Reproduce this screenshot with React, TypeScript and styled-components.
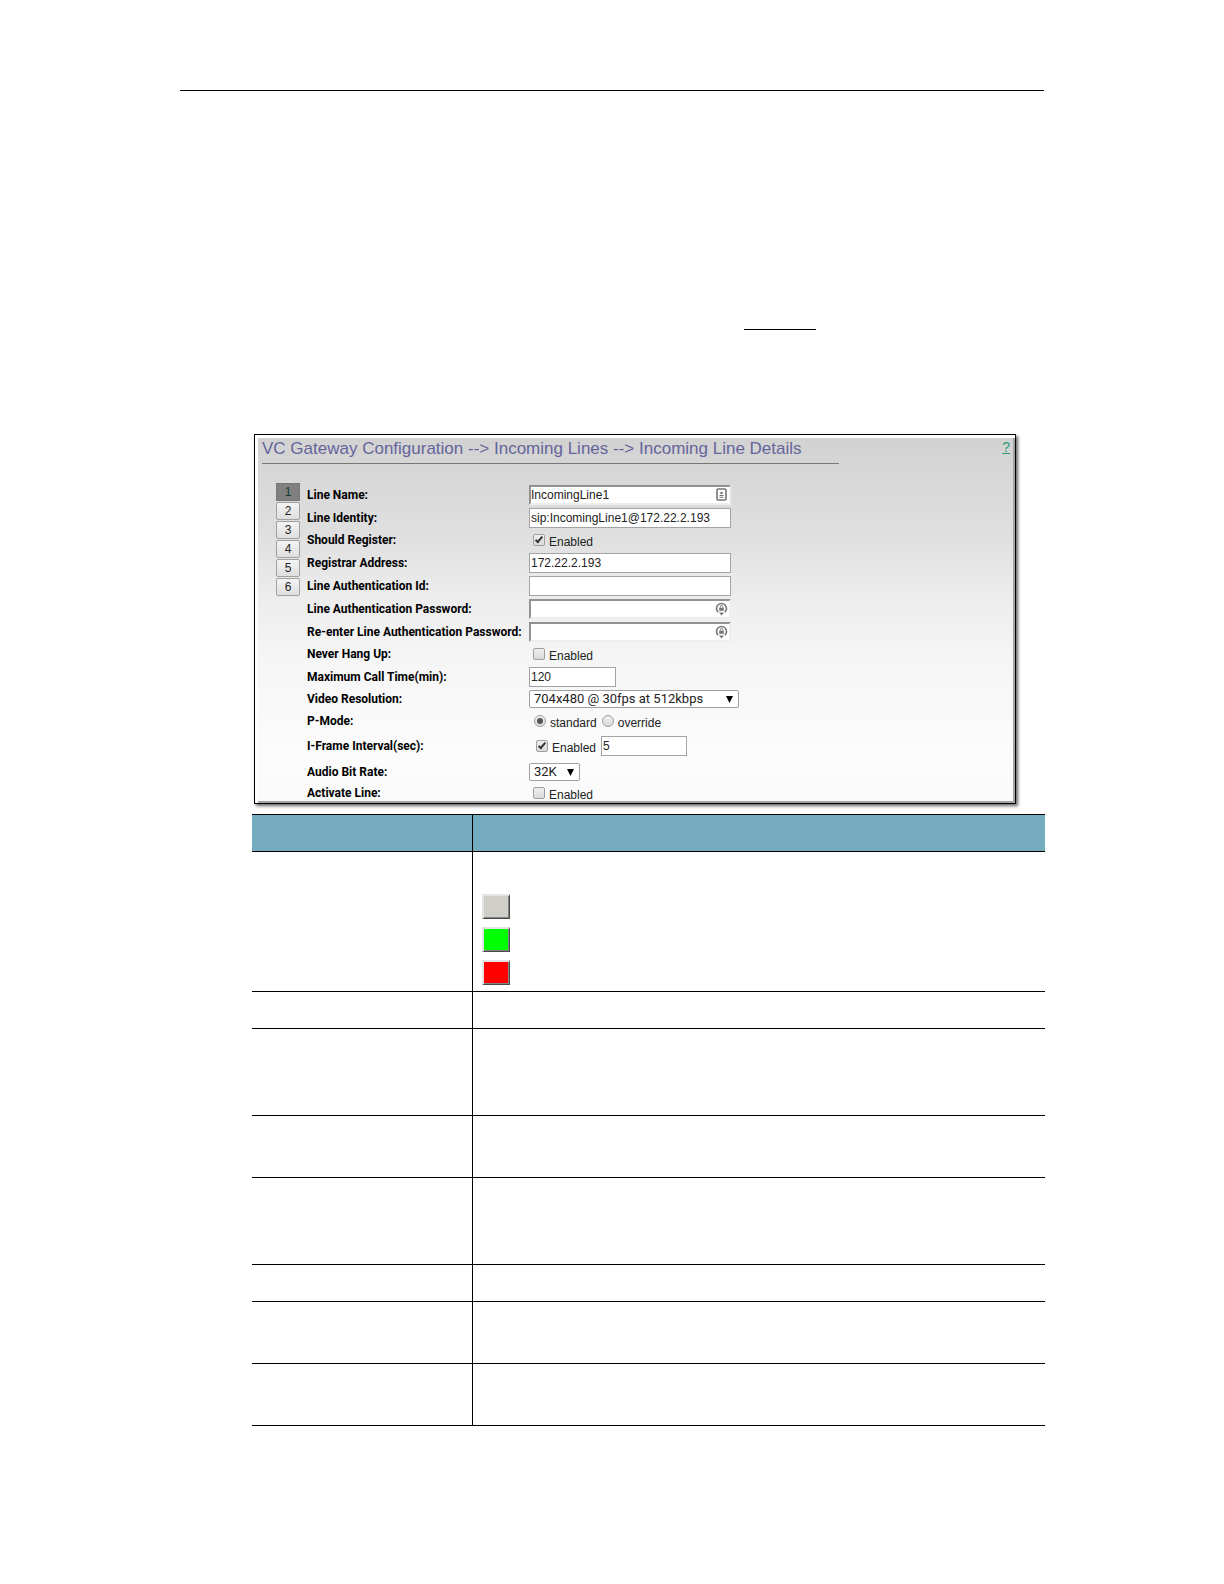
import React from 'react';
import styled, { createGlobalStyle, css } from 'styled-components';

const GlobalStyle = createGlobalStyle`
  *, *::before, *::after { box-sizing: border-box; }
  body {
    margin: 0;
    background: #fff;
    color: #000;
    font-family: "Liberation Sans", Arial, sans-serif;
    font-size: 12px;
  }
`;

const Page = styled.main`
  padding: 90px 180px 158px;
`;

const HeaderRule = styled.hr`
  height: 1px;
  margin: 0;
  border: 0;
  background: #000;
`;

const Intro = styled.section`
  display: flex;
  flex-direction: column;
  padding: 238px 0 104px 564px;
`;

const ReferenceRule = styled.hr`
  width: 72px;
  height: 1px;
  margin: 0;
  border: 0;
  background: #000;
`;

const Figure = styled.section`
  margin: 0 28px 0 74px;
  padding: 3px 0 0 3px;
  border: 1px solid #000;
  background: #fff;
  box-shadow: 2px 2px 3px rgba(0, 0, 0, 0.6);
`;

const Panel = styled.div`
  border: solid #a4a4a4;
  border-width: 0 2px 2px 0;
  background: linear-gradient(#d2d2d2 0, #dfdfdf 95px, #ededed 160px, #f6f6f6 225px, #fcfcfc 320px, #fafafa 100%);
  padding: 0 0 0 4px;
`;

const TitleBar = styled.header`
  display: flex;
  justify-content: space-between;
  height: 26px;
  padding-right: 3px;
`;

const Title = styled.h1`
  flex: 0 1 577px;
  margin: 0;
  border-bottom: 1px solid #777;
  color: #65659b;
  font-size: 17px;
  font-weight: 400;
  line-height: 22px;
  white-space: nowrap;
`;

const HelpLink = styled.a`
  color: #2d9b70;
  font-size: 14px;
  line-height: 18px;
`;

const Body = styled.div`
  display: flex;
  gap: 7px;
  padding: 19px 0 0 14px;
`;

const Pager = styled.nav`
  display: flex;
  flex-direction: column;
  gap: 1px;
`;

const PageButton = styled.button<{ $current?: boolean }>`
  width: 24px;
  height: 18px;
  padding: 0;
  border: 1px solid ${p => (p.$current ? '#777' : '#a0a0a0')};
  border-radius: ${p => (p.$current ? '0' : '2px')};
  background: ${p => (p.$current ? '#808080' : 'linear-gradient(#f4f4f4, #dedede)')};
  color: ${p => (p.$current ? '#123d2c' : '#222')};
  font: 12px/14px "Liberation Sans", Arial, sans-serif;
`;

const Form = styled.form`
  flex: 1;
`;

const Row = styled.div<{ $height: number }>`
  display: grid;
  grid-template-columns: 222px 1fr;
  align-items: center;
  height: ${p => p.$height}px;
`;

const RowLabel = styled.label`
  font-family: Roboto, "Liberation Sans", sans-serif;
  font-weight: 700;
  line-height: 16px;
  white-space: nowrap;
`;

const Field = styled.div`
  display: flex;
  align-items: center;
`;

const Options = styled(Field)<{ $indent: number }>`
  padding-left: ${p => p.$indent}px;
`;

const InputBox = styled.div`
  position: relative;
  display: flex;
  justify-self: start;
`;

const TextInput = styled.input<{ $width: number; $inset?: boolean }>`
  width: ${p => p.$width}px;
  height: 20px;
  padding: 0 1px;
  border: 1px solid #a3a3a3;
  border-radius: 0;
  outline: 0;
  background: #fff;
  color: #222;
  font: 12px "Liberation Sans", Arial, sans-serif;
  ${p => p.$inset && css`
    border: 2px solid;
    border-color: #929292 #eee #eee #929292;
    padding: 0;
  `}
`;

const FieldIcon = styled.svg`
  position: absolute;
  top: 3px;
  right: 3px;
  width: 13px;
  height: 14px;
`;

const Choice = styled.label`
  display: flex;
  align-items: center;
  gap: 4px;
  margin-right: 5px;
  color: #222;
`;

const ChoiceText = styled.span`
  padding-top: 4px;
  line-height: 16px;
`;

const tick = css`
  &:checked::after {
    content: "";
    position: absolute;
    left: 3px;
    top: 0;
    width: 4px;
    height: 8px;
    border: solid #333;
    border-width: 0 2px 2px 0;
    transform: rotate(40deg);
  }
`;

const dot = css`
  &:checked::after {
    content: "";
    position: absolute;
    inset: 2px;
    border-radius: 50%;
    background: #555;
  }
`;

const Toggle = styled.input`
  appearance: none;
  position: relative;
  width: 12px;
  height: 12px;
  margin: 0;
  border: 1px solid #a0a0a0;
  border-radius: ${p => (p.type === 'radio' ? '50%' : '2px')};
  background: linear-gradient(#efefef, #dadada);
  ${p => (p.type === 'radio' ? dot : tick)}
`;

const SelectBox = styled.div<{ $width: number }>`
  position: relative;
  display: flex;
  width: ${p => p.$width}px;
`;

const Select = styled.select`
  appearance: none;
  width: 100%;
  height: 18px;
  padding: 0 4px;
  border: 1px solid #a0a0a0;
  border-radius: 2px;
  background: #fff;
  color: #222;
  font: 13px/16px Roboto, "Liberation Sans", sans-serif;
`;

const Arrow = styled.svg`
  position: absolute;
  top: 6px;
  right: 6px;
  width: 7px;
  height: 7px;
  pointer-events: none;
`;

const Table = styled.table`
  width: calc(100% - 71px);
  margin: 10px 0 0 72px;
  border-collapse: collapse;
  table-layout: fixed;
`;

const HeadCell = styled.th<{ $narrow?: boolean }>`
  width: ${p => (p.$narrow ? '220px' : 'auto')};
  height: 37px;
  padding: 0;
  border: solid #000;
  border-width: 1px 0;
  background: #75abbe;
  & + & { border-left-width: 1px; }
`;

const Cell = styled.td<{ $height: number }>`
  height: ${p => p.$height}px;
  padding: 0 9px;
  border-bottom: 1px solid #000;
  vertical-align: bottom;
  & + & { border-left: 1px solid #000; }
`;

const Swatches = styled.div`
  display: flex;
  flex-direction: column;
  gap: 8px;
  padding-bottom: 6px;
`;

const Swatch = styled.span<{ $color: string }>`
  width: 28px;
  height: 25px;
  border: solid;
  border-width: 2px 1px 1px 2px;
  border-color: #e4e4e4 #484848 #484848 #e4e4e4;
  background: ${p => p.$color};
  box-shadow: inset -1px -1px #858585;
`;

const CardIcon = () => (
  <FieldIcon viewBox="0 0 13 14" fill="none" stroke="#777" aria-hidden="true">
    <rect x="2" y="1" width="9" height="11" rx="1" strokeWidth="1.6" />
    <circle cx="6.5" cy="5" r="1.3" fill="#777" stroke="none" />
    <path d="M4.5 7.5h4M4.5 9.3h4" />
  </FieldIcon>
);

const LockIcon = () => (
  <FieldIcon viewBox="0 0 13 14" fill="none" stroke="#777" aria-hidden="true">
    <path d="M3.2 10.2A5 5 0 1 1 9.8 10.2" strokeWidth="1.6" />
    <path d="M4 10.4h5L6.5 13.6z" fill="#777" stroke="none" />
    <rect x="4.2" y="5.8" width="4.6" height="3" fill="#777" stroke="none" />
    <path d="M5.2 5.8V4.8a1.3 1.3 0 0 1 2.6 0v1" />
  </FieldIcon>
);

interface TextRowProps {
  id: string;
  label: string;
  value?: string;
  type?: string;
  width?: number;
  icon?: React.ReactNode;
}

const TextRow = ({ id, label, value = '', type = 'text', width = 202, icon }: TextRowProps) => (
  <Row $height={23}>
    <RowLabel htmlFor={id}>{label}</RowLabel>
    <InputBox>
      <TextInput id={id} type={type} defaultValue={value} $width={width} $inset={Boolean(icon)} />
      {icon}
    </InputBox>
  </Row>
);

const CheckRow = ({ id, label, checked, height = 22 }: { id: string; label: string; checked?: boolean; height?: number }) => (
  <Row $height={height}>
    <RowLabel htmlFor={id}>{label}</RowLabel>
    <Options $indent={4}>
      <Choice>
        <Toggle id={id} type="checkbox" defaultChecked={checked} />
        <ChoiceText>Enabled</ChoiceText>
      </Choice>
    </Options>
  </Row>
);

const SelectRow = ({ id, label, value, width }: { id: string; label: string; value: string; width: number }) => (
  <Row $height={22}>
    <RowLabel htmlFor={id}>{label}</RowLabel>
    <SelectBox $width={width}>
      <Select id={id} defaultValue={value}>
        <option>{value}</option>
      </Select>
      <Arrow viewBox="0 0 7 7" aria-hidden="true"><path d="M0 0h7L3.5 7z" /></Arrow>
    </SelectBox>
  </Row>
);

const rowHeights = [37, 87, 62, 87, 37, 62, 62];

export default function App() {
  return (
    <>
      <GlobalStyle />
      <Page>
        <HeaderRule />
        <Intro><ReferenceRule /></Intro>
        <Figure>
          <Panel>
            <TitleBar>
              <Title>VC Gateway Configuration --&gt; Incoming Lines --&gt; Incoming Line Details</Title>
              <HelpLink href="#help">?</HelpLink>
            </TitleBar>
            <Body>
              <Pager>
                {[1, 2, 3, 4, 5, 6].map(n => (
                  <PageButton key={n} type="button" $current={n === 1}>{n}</PageButton>
                ))}
              </Pager>
              <Form>
                <TextRow id="name" label="Line Name:" value="IncomingLine1" icon={<CardIcon />} />
                <TextRow id="identity" label="Line Identity:" value="sip:IncomingLine1@172.22.2.193" />
                <CheckRow id="register" label="Should Register:" checked />
                <TextRow id="registrar" label="Registrar Address:" value="172.22.2.193" />
                <TextRow id="auth-id" label="Line Authentication Id:" />
                <TextRow id="password" label="Line Authentication Password:" type="password" icon={<LockIcon />} />
                <TextRow id="password-again" label="Re-enter Line Authentication Password:" type="password" icon={<LockIcon />} />
                <CheckRow id="never-hang-up" label="Never Hang Up:" />
                <TextRow id="max-time" label="Maximum Call Time(min):" value="120" width={87} />
                <SelectRow id="resolution" label="Video Resolution:" value="704x480 @ 30fps at 512kbps" width={210} />
                <Row $height={21}>
                  <RowLabel as="span">P-Mode:</RowLabel>
                  <Options $indent={5}>
                    <Choice>
                      <Toggle type="radio" name="p-mode" defaultChecked />
                      <ChoiceText>standard</ChoiceText>
                    </Choice>
                    <Choice>
                      <Toggle type="radio" name="p-mode" />
                      <ChoiceText>override</ChoiceText>
                    </Choice>
                  </Options>
                </Row>
                <Row $height={30}>
                  <RowLabel htmlFor="interval">I-Frame Interval(sec):</RowLabel>
                  <Options $indent={7}>
                    <Choice>
                      <Toggle type="checkbox" defaultChecked />
                      <ChoiceText>Enabled</ChoiceText>
                    </Choice>
                    <TextInput id="interval" type="text" defaultValue="5" $width={86} />
                  </Options>
                </Row>
                <SelectRow id="audio" label="Audio Bit Rate:" value="32K" width={51} />
                <CheckRow id="activate" label="Activate Line:" height={18} />
              </Form>
            </Body>
          </Panel>
        </Figure>
        <Table>
          <thead>
            <tr><HeadCell $narrow /><HeadCell /></tr>
          </thead>
          <tbody>
            <tr>
              <Cell $height={140} />
              <Cell $height={140}>
                <Swatches>
                  <Swatch $color="#d0cec8" />
                  <Swatch $color="#00ff00" />
                  <Swatch $color="#ff0000" />
                </Swatches>
              </Cell>
            </tr>
            {rowHeights.map((h, i) => (
              <tr key={i}><Cell $height={h} /><Cell $height={h} /></tr>
            ))}
          </tbody>
        </Table>
      </Page>
    </>
  );
}
